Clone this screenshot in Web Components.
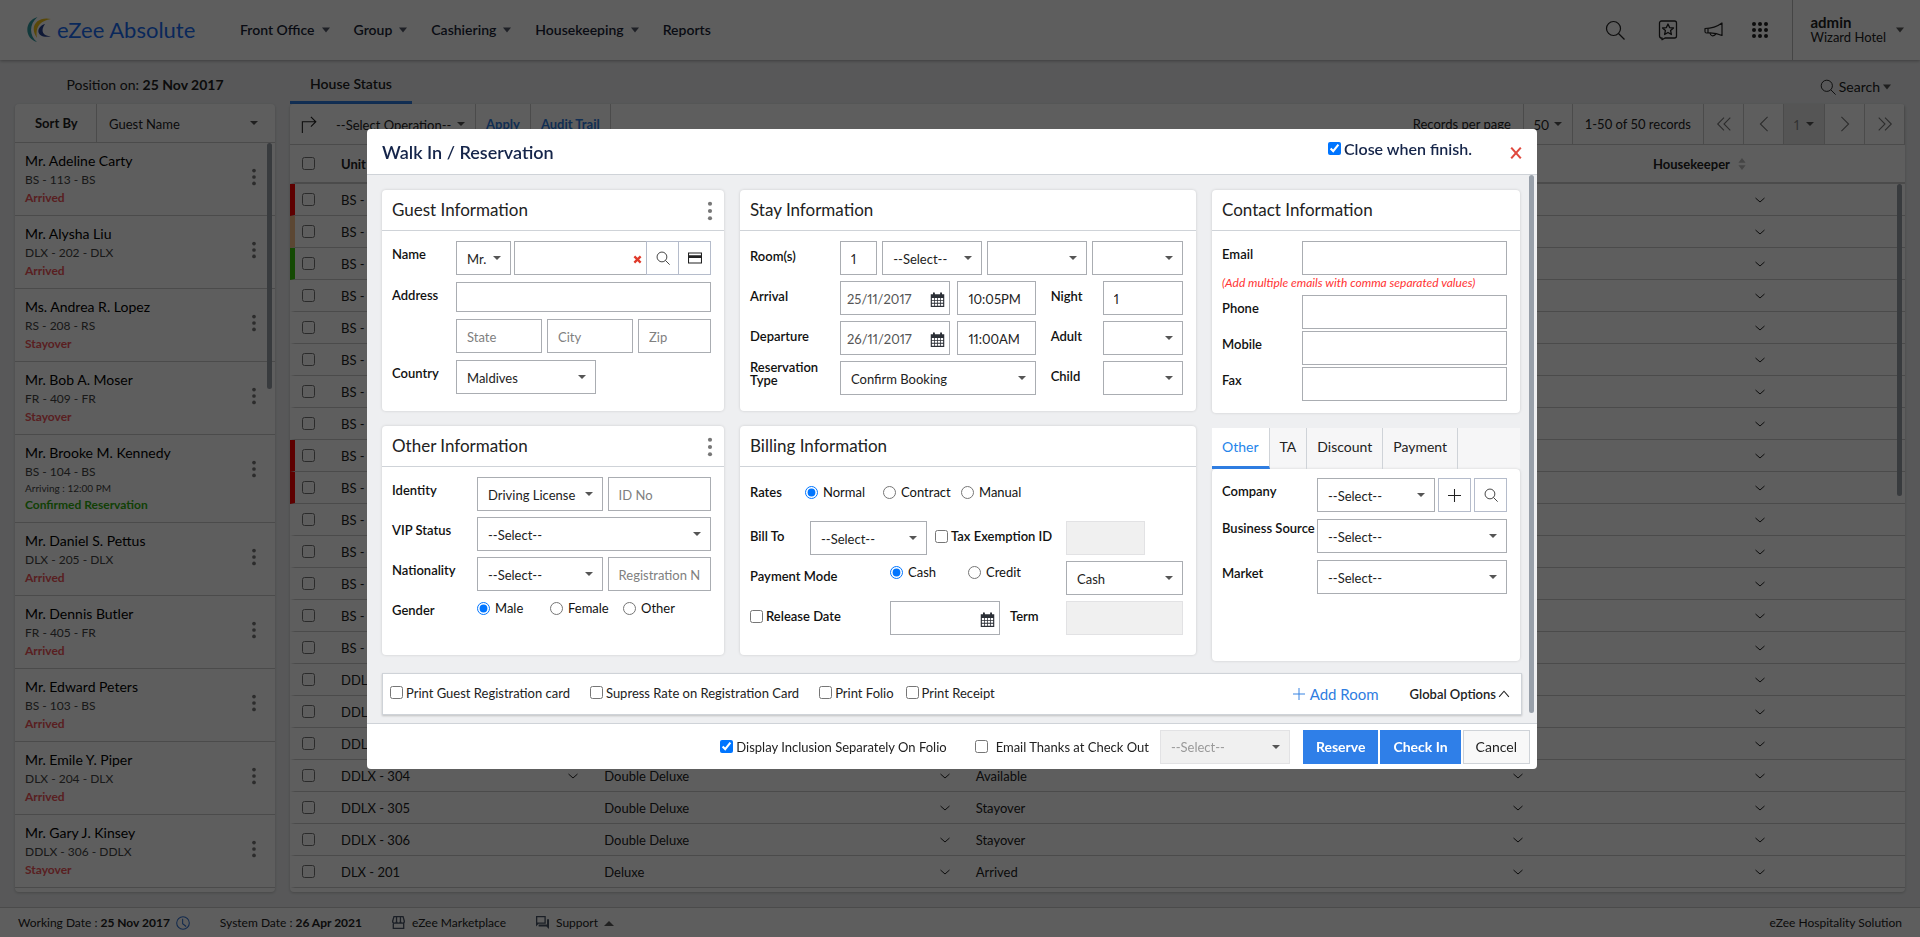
<!DOCTYPE html>
<html lang="en">
<head>
    <meta charset="UTF-8">
    <meta name="viewport" content="width=device-width, initial-scale=1.0">
    <title>eZee Absolute</title>
    <style>
        body {
            margin: 0;
            background: #eeeff1;
            font: 13px/18px Lato, "Liberation Sans", sans-serif;
            color: #222;
        }
    </style>
</head>
<body>
    <ez-app></ez-app>

    <template id="tmpl-app">
        <style>
            :host {
                display: flex;
                flex-direction: column;
                height: 100vh;
            }
            main {
                flex: 1;
                min-height: 0;
                display: grid;
                grid-template-columns: 260px 1fr;
                gap: 15px;
                padding: 0 15px 15px;
            }
        </style>
        <ez-header></ez-header>
        <main>
            <guest-list></guest-list>
            <house-status></house-status>
        </main>
        <ez-footer></ez-footer>
        <walkin-dialog></walkin-dialog>
    </template>

    <template id="tmpl-header">
        <style>
            :host {
                display: flex;
                align-items: center;
                height: 60px;
                background: #fff;
                box-shadow: 0 1px 3px rgba(0, 0, 0, .3);
                position: relative;
            }
            .logo {
                display: flex;
                align-items: center;
                gap: 5px;
                width: 240px;
                padding-left: 26px;
                box-sizing: border-box;
                font-size: 22px;
                color: #1a6cf5;
                text-decoration: none;
            }
            nav {
                display: flex;
                gap: 24px;
                flex: 1;
            }
            nav a {
                display: flex;
                align-items: center;
                gap: 7px;
                font-size: 14px;
                font-weight: 600;
                color: #1a1f36;
                text-decoration: none;
            }
            .tools {
                display: flex;
                gap: 26px;
                padding-right: 22px;
            }
            .tools button:first-child {
                margin-right: 7px;
            }
            .user {
                display: flex;
                align-items: center;
                justify-content: space-between;
                gap: 10px;
                height: 60px;
                padding: 0 16px 0 18px;
                border-left: 1px solid #bbb;
                line-height: 15px;
                text-align: left;
            }
            .user b {
                display: block;
                font-size: 15px;
            }
        </style>
        <a class="logo" href="#">
            <svg width="26" height="26" viewBox="0 0 26 26">
                <path fill="#2f9aa0" d="M11.5 0C-2 4-2 21 11 25 3 19 3 7 11.5 0z"/>
                <path fill="#f0c419" d="M25 2C13-1 2 8 11 21 9 11 13 4 25 2z"/>
                <path fill="#2b4594" d="M19 7C9 10 10 22 25 19.500 17 19 14 14 19 7z"/>
            </svg>
            <span>eZee Absolute</span>
        </a>
        <nav>
            <a href="#">Front Office <ez-icon name="down"></ez-icon></a>
            <a href="#">Group <ez-icon name="down"></ez-icon></a>
            <a href="#">Cashiering <ez-icon name="down"></ez-icon></a>
            <a href="#">Housekeeping <ez-icon name="down"></ez-icon></a>
            <a href="#">Reports</a>
        </nav>
        <div class="tools">
            <button aria-label="Search"><ez-icon name="search" size="20"></ez-icon></button>
            <button aria-label="Favourites"><ez-icon name="star" size="20"></ez-icon></button>
            <button aria-label="Announcements"><ez-icon name="horn" size="20"></ez-icon></button>
            <button aria-label="Apps"><ez-icon name="grid" size="20"></ez-icon></button>
        </div>
        <button class="user">
            <span><b>admin</b>Wizard Hotel</span>
            <ez-icon name="down"></ez-icon>
        </button>
    </template>

    <template id="tmpl-guests">
        <style>
            :host {
                display: flex;
                flex-direction: column;
                min-height: 0;
            }
            .position {
                height: 44px;
                line-height: 50px;
                box-sizing: border-box;
                text-align: center;
                font-size: 14px;
            }
            .panel {
                flex: 1;
                min-height: 0;
                overflow: hidden;
                background: #fff;
                border-radius: 4px;
                box-shadow: 0 1px 3px rgba(0, 0, 0, .2);
                position: relative;
            }
            .sort {
                display: grid;
                grid-template-columns: 82px 1fr;
                align-items: center;
                height: 38px;
                border-bottom: 1px solid #ccc;
            }
            .sort label {
                font-weight: 700;
                padding-left: 20px;
                line-height: 38px;
                border-right: 1px solid #ccc;
            }
            .sort select {
                padding-left: 12px;
                border: 0;
            }
            .sort .sel::after {
                margin-right: 17px;
            }
            ul {
                margin: 0;
                padding: 0;
                list-style: none;
            }
            li {
                display: flex;
                justify-content: space-between;
                padding: 8px 13px 8px 10px;
                border-bottom: 1px solid #ccc;
            }
            li p {
                margin: 0;
                font-size: 12px;
                color: #444;
            }
            li .name {
                font-size: 14px;
                line-height: 20px;
                color: #000;
            }
            li .time {
                font-size: 10px;
                line-height: 15px;
            }
            li .status {
                font-weight: 700;
                color: #f0555a;
            }
            li .confirmed {
                color: #2fae0e;
            }
            li button {
                height: 50px;
            }
            .thumb {
                position: absolute;
                top: 39px;
                right: 3px;
                width: 5px;
                height: 246px;
                border-radius: 3px;
                background: #999fa8;
            }
        </style>
        <div class="position">Position on: <b>25 Nov 2017</b></div>
        <div class="panel">
            <div class="sort">
                <label for="sort">Sort By</label>
                <span class="sel"><select id="sort"><option>Guest Name</option></select></span>
            </div>
            <ul></ul>
            <div class="thumb"></div>
        </div>
    </template>

    <template id="tmpl-status">
        <style>
            :host {
                display: flex;
                flex-direction: column;
                min-height: 0;
            }
            .top {
                display: flex;
                justify-content: space-between;
                height: 44px;
                padding-right: 14px;
            }
            .tab {
                padding: 6px 20px 0;
                height: 44px;
                border-bottom: 3px solid #2f7de1;
                font-size: 14px;
                font-weight: 600;
            }
            .search {
                display: flex;
                align-items: center;
                gap: 3px;
                padding-top: 9px;
                font-size: 14px;
            }
            .panel {
                flex: 1;
                min-height: 0;
                overflow: hidden;
                background: #fff;
                border-radius: 4px;
                box-shadow: 0 1px 3px rgba(0, 0, 0, .2);
                position: relative;
            }
            .bar {
                display: flex;
                align-items: stretch;
                height: 40px;
                border-bottom: 1px solid #ccc;
            }
            .bar > * {
                display: flex;
                align-items: center;
                border-right: 1px solid #ccc;
                box-sizing: border-box;
            }
            .bar .arrow {
                width: 36px;
                padding-left: 11px;
                border: 0;
            }
            .bar .sel {
                display: grid;
            }
            .bar select {
                border: 0;
            }
            .bar .op {
                width: 150px;
            }
            .bar a {
                padding: 0 10px;
                font-weight: 700;
                color: #2f7de1;
                text-decoration: none;
            }
            .bar label {
                flex: 1;
                justify-content: flex-end;
                padding-right: 12px;
            }
            .bar .count {
                width: 49px;
            }
            .bar .page {
                width: 41px;
                background: #e6e6e6;
                color: #888;
            }
            .bar .total {
                padding: 0 12px;
            }
            .bar .nav {
                width: 40px;
                justify-content: center;
                color: #777;
            }
            table {
                width: 100%;
                table-layout: fixed;
                border-collapse: separate;
                border-spacing: 0;
            }
            th, td {
                height: 31px;
                padding: 0 12px 0 14px;
                border-bottom: 1px solid #ccc;
                text-align: left;
            }
            th {
                height: 37px;
                border-bottom-width: 2px;
            }
            th:last-child, td:last-child {
                padding: 0;
            }
            td:first-child, th:first-child {
                padding: 0 0 0 7px;
                border-left: 5px solid transparent;
            }
            tr.red td:first-child { border-left-color: #f00; }
            tr.orange td:first-child { border-left-color: #f9c08a; }
            tr.green td:first-child { border-left-color: #36c90a; }
            .cell {
                display: flex;
                align-items: center;
                justify-content: space-between;
            }
            .cell ez-icon {
                margin-left: auto;
            }
            .keeper {
                display: flex;
                align-items: center;
                gap: 6px;
                padding-left: 104px;
            }
            .thumb {
                position: absolute;
                top: 80px;
                right: 3px;
                width: 5px;
                height: 312px;
                border-radius: 3px;
                background: #999fa8;
            }
        </style>
        <div class="top">
            <button class="tab">House Status</button>
            <button class="search"><ez-icon name="search" size="16"></ez-icon>Search<ez-icon name="down"></ez-icon></button>
        </div>
        <div class="panel">
            <div class="bar">
                <span class="arrow"><ez-icon name="turn" size="18"></ez-icon></span>
                <span class="sel op"><select aria-label="Operation"><option>--Select Operation--</option></select></span>
                <a href="#">Apply</a>
                <a href="#">Audit Trail</a>
                <label for="count">Records per page</label>
                <span class="sel count"><select id="count"><option>50</option></select></span>
                <span class="total">1-50 of 50 records</span>
                <button class="nav" aria-label="First"><ez-icon name="first" size="18"></ez-icon></button>
                <button class="nav" aria-label="Previous"><ez-icon name="prev" size="18"></ez-icon></button>
                <span class="sel page"><select aria-label="Page"><option>1</option></select></span>
                <button class="nav" aria-label="Next"><ez-icon name="next" size="18"></ez-icon></button>
                <button class="nav" aria-label="Last"><ez-icon name="last" size="18"></ez-icon></button>
            </div>
            <table>
                <colgroup>
                    <col style="width: 37px">
                    <col style="width: 16.300%">
                    <col style="width: 23%">
                    <col style="width: 35.500%">
                    <col style="width: 15%">
                    <col>
                </colgroup>
                <thead>
                    <tr>
                        <th><input type="checkbox" aria-label="Select all"></th>
                        <th>Unit</th>
                        <th></th>
                        <th></th>
                        <th><span class="keeper">Housekeeper <ez-icon name="sort" size="12"></ez-icon></span></th>
                        <th></th>
                    </tr>
                </thead>
                <tbody></tbody>
            </table>
            <div class="thumb"></div>
        </div>
    </template>

    <template id="tmpl-footer">
        <style>
            :host {
                display: flex;
                align-items: center;
                height: 29px;
                padding: 0 18px;
                border-top: 1px solid #ccc;
                background: #fff;
                font-size: 12px;
            }
            span, a {
                display: flex;
                align-items: center;
                gap: 7px;
                margin-right: 30px;
                color: inherit;
                text-decoration: none;
            }
            span {
                gap: 3px;
            }
            span ez-icon {
                margin-left: 3px;
            }
            span:last-child {
                margin: 0 0 0 auto;
            }
        </style>
        <span>Working Date : <b>25 Nov 2017</b> <ez-icon name="clock" size="14"></ez-icon></span>
        <span>System Date : <b>26 Apr 2021</b></span>
        <a href="#"><ez-icon name="shop" size="13"></ez-icon>eZee Marketplace</a>
        <a href="#"><ez-icon name="chat" size="13"></ez-icon>Support <ez-icon name="up"></ez-icon></a>
        <span>eZee Hospitality Solution</span>
    </template>

    <template id="tmpl-card">
        <style>
            :host {
                display: block;
                background: #fff;
                border-radius: 4px;
                box-shadow: 0 0 3px rgba(0, 0, 0, .15);
            }
            header {
                display: flex;
                align-items: center;
                justify-content: space-between;
                height: 40px;
                padding: 0 5px 0 10px;
                border-bottom: 1px solid #cfd3d8;
            }
            h2 {
                margin: 0;
                font-size: 17px;
                font-weight: 400;
            }
            .body {
                box-sizing: border-box;
                min-height: 180px;
                padding: 10px 13px 12px 10px;
            }
            :host([tall]) .body {
                min-height: 188px;
            }
        </style>
        <header><h2></h2><slot name="menu"></slot></header>
        <div class="body"><slot></slot></div>
    </template>

    <template id="tmpl-tabs">
        <style>
            :host {
                display: block;
            }
            .tabs {
                display: flex;
                height: 41px;
                background: #f6f6f7;
            }
            .tabs button {
                padding: 0 10px 4px;
                border-right: 1px solid #cfd3d8;
                font-size: 14px;
            }
            .tabs .on {
                padding-bottom: 1px;
                border-bottom: 3px solid #2f7de1;
                background: #fff;
                color: #2585ea;
            }
            .body {
                box-sizing: border-box;
                min-height: 192px;
                padding: 9px 13px 12px 10px;
                background: #fff;
                border-radius: 4px;
                box-shadow: 0 0 3px rgba(0, 0, 0, .15);
            }
        </style>
        <div class="tabs">
            <button class="on">Other</button>
            <button>TA</button>
            <button>Discount</button>
            <button>Payment</button>
        </div>
        <div class="body"><slot></slot></div>
    </template>

    <template id="tmpl-dialog">
        <style>
            :host {
                position: fixed;
                inset: 0;
                display: flex;
                justify-content: center;
                align-items: flex-start;
                padding: 129px 16px 0 0;
                background: rgba(0, 0, 0, .63);
            }
            .dialog {
                width: 94%;
                max-width: 1170px;
                border-radius: 4px;
                background: #fff;
                overflow: hidden;
            }
            .head {
                display: flex;
                align-items: center;
                height: 45px;
                padding: 0 15px;
                border-bottom: 1px solid #cfd3d8;
                color: #15254a;
            }
            h1 {
                flex: 1;
                margin: 0;
                font-size: 18px;
                font-weight: 600;
            }
            .head label {
                padding: 0 38px 6px 0;
                font-size: 16px;
                font-weight: 600;
            }
            .head button {
                color: #e04a3f;
            }
            .body {
                position: relative;
                padding: 15px 15px 8px;
                background: #eeeff1;
            }
            .thumb {
                position: absolute;
                top: 0;
                right: 3px;
                bottom: 10px;
                width: 5px;
                border-radius: 3px;
                background: #98a0aa;
            }
            .columns {
                display: grid;
                grid-template-columns: 342fr 456fr 308fr;
                gap: 16px;
                padding-right: 2px;
            }
            .columns > div {
                display: grid;
                gap: 15px;
                align-content: start;
            }
            .rows {
                display: grid;
                gap: 6px;
            }
            .rows.loose { gap: 7px; }
            .rows.tight { gap: 2px; }
            .row {
                display: grid;
                gap: 5px;
                align-items: start;
            }
            .row > label, .row > .label {
                padding-top: 4px;
                font-weight: 600;
                color: #111;
            }
            .low .row > label, .low .row > .label {
                padding-top: 6px;
            }
            .row .two-line {
                line-height: 13px;
            }
            .low .row > .two-line, .row > .raised {
                padding-top: 0;
            }
            .row .aside {
                padding-left: 8px;
            }
            .row > .check, .low .row > .check {
                font-weight: 400;
                padding-top: 2px;
            }
            .low .row > .strong {
                font-weight: 600;
                padding-top: 6px;
            }
            .low .rates > .check {
                padding-top: 6px;
            }
            .check {
                display: inline-flex;
                align-items: center;
                gap: 3px;
            }
            .radio {
                gap: 5px;
            }
            .name { grid-template-columns: 61px 55px 1fr; gap: 3px; }
            .name .group {
                display: grid;
                grid-template-columns: 1fr 32px 32px;
            }
            .plain { grid-template-columns: 64px 1fr; gap: 0; }
            .plain input {
                height: 30px;
            }
            .place { grid-template-columns: 86fr 86fr 73fr; padding-left: 64px; }
            .country { grid-template-columns: 64px 140px; gap: 0; }
            .rooms { grid-template-columns: 85px 37fr 99fr 100fr 90fr; }
            .stay { grid-template-columns: 83px 110fr 78fr 53px 80fr; gap: 7px; }
            .stay .wide { grid-column: span 2; }
            .contact { grid-template-columns: 80px 1fr; gap: 0; }
            .note {
                margin: 0;
                padding-bottom: 4px;
                font-size: 12px;
                font-style: italic;
                line-height: 12px;
                white-space: nowrap;
                color: #f33;
            }
            .identity { grid-template-columns: 80px 125fr 103fr; }
            .identity .wide { grid-column: span 2; }
            .gender { grid-template-columns: 80px 68px 68px 1fr; }
            .rates { grid-template-columns: 55px 78px 78px 1fr; gap: 0; height: 38px; }
            .bill { grid-template-columns: 52px 117px 123px 79px; gap: 8px; }
            .payment { grid-template-columns: 140px 78px 98px 1fr; gap: 0; }
            .release { grid-template-columns: 140px 110px 66px 1fr; gap: 0; }
            .release .term { padding-left: 10px; }
            .company { grid-template-columns: 92px 1fr 33px 33px; gap: 3px; }
            .source { grid-template-columns: 95px 1fr; gap: 0; white-space: nowrap; }

            .clear, .date {
                display: grid;
                align-items: center;
            }
            .clear > *, .date > * {
                grid-area: 1 / 1;
            }
            .clear button, .date button {
                justify-self: end;
                margin-right: 5px;
            }
            .clear button {
                color: #e03a2a;
            }
            .date input {
                padding-left: 6px;
                color: #555;
            }
            .tool {
                display: flex;
                align-items: center;
                justify-content: center;
                height: 34px;
                box-sizing: border-box;
                border: 1px solid #b5bccb;
            }
            .name .tool {
                margin-left: -1px;
            }
            .options {
                display: flex;
                align-items: center;
                height: 40px;
                margin-top: 12px;
                padding: 0 10px 0 7px;
                border: 1px solid #cfd3d8;
                box-shadow: 0 1px 2px rgba(0, 0, 0, .2);
                background: #fff;
            }
            .options .check {
                margin-right: 20px;
                padding-bottom: 3px;
            }
            .options .check + .check + .check {
                margin-right: 12px;
            }
            .add {
                display: flex;
                align-items: center;
                gap: 5px;
                margin: 0 31px 0 auto;
                font-size: 15px;
                color: #2f7de1;
            }
            .global {
                display: flex;
                align-items: center;
                gap: 1px;
                font-weight: 600;
            }
            .foot {
                display: flex;
                align-items: center;
                justify-content: flex-end;
                gap: 2px;
                height: 45px;
                padding: 0 7px;
                border-top: 1px solid #cfd3d8;
            }
            .foot .check {
                margin-right: 26px;
            }
            .foot .thanks {
                gap: 8px;
                margin-right: 9px;
            }
            .foot .sel {
                width: 130px;
                margin-right: 11px;
            }
            .foot .btn {
                height: 34px;
                padding: 0 13px;
                background: #2f7fe8;
                color: #fff;
                font-size: 14px;
                font-weight: 700;
            }
            .foot .cancel {
                padding: 0 12px;
                border: 1px solid #cfd3d8;
                background: #f8f8f8;
                color: #222;
                font-weight: 400;
            }
        </style>
        <form class="dialog" role="dialog" aria-labelledby="title">
            <div class="head">
                <h1 id="title">Walk In / Reservation</h1>
                <label class="check"><input type="checkbox" checked>Close when finish.</label>
                <button type="button" aria-label="Close"><ez-icon name="close" size="12"></ez-icon></button>
            </div>
            <div class="body">
                <div class="columns">
                    <div>
                        <info-card heading="Guest Information">
                            <button type="button" slot="menu" aria-label="Guest menu"><ez-icon name="dots" size="18"></ez-icon></button>
                            <div class="rows loose">
                                <div class="row name">
                                    <label for="name">Name</label>
                                    <span class="sel"><select aria-label="Title"><option>Mr.</option></select></span>
                                    <span class="group">
                                        <span class="clear">
                                            <input type="text" id="name">
                                            <button type="button" aria-label="Clear name"><ez-icon name="times" size="9"></ez-icon></button>
                                        </span>
                                        <button type="button" class="tool" aria-label="Find guest"><ez-icon name="search" size="14"></ez-icon></button>
                                        <button type="button" class="tool" aria-label="Scan card"><ez-icon name="card" size="14"></ez-icon></button>
                                    </span>
                                </div>
                                <div class="row plain"><label for="address">Address</label><input type="text" id="address"></div>
                                <div class="row place">
                                    <input type="text" placeholder="State" aria-label="State">
                                    <input type="text" placeholder="City" aria-label="City">
                                    <input type="text" placeholder="Zip" aria-label="Zip">
                                </div>
                                <div class="row country">
                                    <label for="country">Country</label>
                                    <span class="sel"><select id="country"><option>Maldives</option></select></span>
                                </div>
                            </div>
                        </info-card>
                        <info-card heading="Other Information" tall>
                            <button type="button" slot="menu" aria-label="Other menu"><ez-icon name="dots" size="18"></ez-icon></button>
                            <div class="rows">
                                <div class="row identity">
                                    <label for="identity">Identity</label>
                                    <span class="sel"><select id="identity"><option>Driving License</option></select></span>
                                    <input type="text" placeholder="ID No" aria-label="ID No">
                                </div>
                                <div class="row identity">
                                    <label for="vip">VIP Status</label>
                                    <span class="sel wide"><select id="vip"><option>--Select--</option></select></span>
                                </div>
                                <div class="row identity">
                                    <label for="nation">Nationality</label>
                                    <span class="sel"><select id="nation"><option>--Select--</option></select></span>
                                    <input type="text" placeholder="Registration No" aria-label="Registration No">
                                </div>
                                <div class="row gender">
                                    <span class="label">Gender</span>
                                    <label class="check radio"><input type="radio" name="gender" checked>Male</label>
                                    <label class="check radio"><input type="radio" name="gender">Female</label>
                                    <label class="check radio"><input type="radio" name="gender">Other</label>
                                </div>
                            </div>
                        </info-card>
                    </div>
                    <div>
                        <info-card heading="Stay Information">
                            <div class="rows low">
                                <div class="row rooms">
                                    <label for="rooms">Room(s)</label>
                                    <input type="text" id="rooms" value="1">
                                    <span class="sel"><select aria-label="Room type"><option>--Select--</option></select></span>
                                    <span class="sel"><select aria-label="Rate type"><option></option></select></span>
                                    <span class="sel"><select aria-label="Room"><option></option></select></span>
                                </div>
                                <div class="row stay">
                                    <label for="arrival">Arrival</label>
                                    <span class="date"><input type="text" id="arrival" value="25/11/2017"><button type="button" aria-label="Pick arrival"><ez-icon name="calendar" size="15"></ez-icon></button></span>
                                    <input type="text" aria-label="Arrival time" value="10:05PM">
                                    <label class="aside" for="night">Night</label>
                                    <input type="text" id="night" value="1">
                                </div>
                                <div class="row stay">
                                    <label for="departure">Departure</label>
                                    <span class="date"><input type="text" id="departure" value="26/11/2017"><button type="button" aria-label="Pick departure"><ez-icon name="calendar" size="15"></ez-icon></button></span>
                                    <input type="text" aria-label="Departure time" value="11:00AM">
                                    <label class="aside" for="adult">Adult</label>
                                    <span class="sel"><select id="adult"><option></option></select></span>
                                </div>
                                <div class="row stay">
                                    <label class="two-line" for="type">Reservation Type</label>
                                    <span class="sel wide"><select id="type"><option>Confirm Booking</option></select></span>
                                    <label class="aside" for="child">Child</label>
                                    <span class="sel"><select id="child"><option></option></select></span>
                                </div>
                            </div>
                        </info-card>
                        <info-card heading="Billing Information" tall>
                            <div class="rows low">
                                <div class="row rates">
                                    <span class="label">Rates</span>
                                    <label class="check radio"><input type="radio" name="rate" checked>Normal</label>
                                    <label class="check radio"><input type="radio" name="rate">Contract</label>
                                    <label class="check radio"><input type="radio" name="rate">Manual</label>
                                </div>
                                <div class="row bill">
                                    <label for="bill">Bill To</label>
                                    <span class="sel"><select id="bill"><option>--Select--</option></select></span>
                                    <label class="check strong"><input type="checkbox">Tax Exemption ID</label>
                                    <input type="text" aria-label="Tax ID" disabled>
                                </div>
                                <div class="row payment">
                                    <span class="label">Payment Mode</span>
                                    <label class="check radio"><input type="radio" name="pay" checked>Cash</label>
                                    <label class="check radio"><input type="radio" name="pay">Credit</label>
                                    <span class="sel"><select aria-label="Payment method"><option>Cash</option></select></span>
                                </div>
                                <div class="row release">
                                    <label class="check strong"><input type="checkbox">Release Date</label>
                                    <span class="date"><input type="text" aria-label="Release date"><button type="button" aria-label="Pick release date"><ez-icon name="calendar" size="15"></ez-icon></button></span>
                                    <label class="term" for="term">Term</label>
                                    <input type="text" id="term" disabled>
                                </div>
                            </div>
                        </info-card>
                    </div>
                    <div>
                        <info-card heading="Contact Information">
                            <div class="rows tight">
                                <div class="row contact"><label for="email">Email</label><input type="text" id="email"></div>
                                <p class="note">(Add multiple emails with comma separated values)</p>
                                <div class="row contact"><label for="phone">Phone</label><input type="text" id="phone"></div>
                                <div class="row contact"><label for="mobile">Mobile</label><input type="text" id="mobile"></div>
                                <div class="row contact"><label for="fax">Fax</label><input type="text" id="fax"></div>
                            </div>
                        </info-card>
                        <info-tabs>
                            <div class="rows loose">
                                <div class="row company">
                                    <label for="company">Company</label>
                                    <span class="sel"><select id="company"><option>--Select--</option></select></span>
                                    <button type="button" class="tool" aria-label="Add company"><ez-icon name="plus" size="13"></ez-icon></button>
                                    <button type="button" class="tool" aria-label="Find company"><ez-icon name="search" size="14"></ez-icon></button>
                                </div>
                                <div class="row source">
                                    <label class="raised" for="source">Business Source</label>
                                    <span class="sel"><select id="source"><option>--Select--</option></select></span>
                                </div>
                                <div class="row source">
                                    <label for="market">Market</label>
                                    <span class="sel"><select id="market"><option>--Select--</option></select></span>
                                </div>
                            </div>
                        </info-tabs>
                    </div>
                </div>
                <div class="options">
                    <label class="check"><input type="checkbox">Print Guest Registration card</label>
                    <label class="check"><input type="checkbox">Supress Rate on Registration Card</label>
                    <label class="check"><input type="checkbox">Print Folio</label>
                    <label class="check"><input type="checkbox">Print Receipt</label>
                    <button type="button" class="add"><ez-icon name="plus" size="12"></ez-icon>Add Room</button>
                    <button type="button" class="global">Global Options<ez-icon name="chevup" size="14"></ez-icon></button>
                </div>
                <div class="thumb"></div>
            </div>
            <div class="foot">
                <label class="check"><input type="checkbox" checked>Display Inclusion Separately On Folio</label>
                <label class="check thanks"><input type="checkbox">Email Thanks at Check Out</label>
                <span class="sel"><select aria-label="Email template" disabled><option>--Select--</option></select></span>
                <button type="button" class="btn">Reserve</button>
                <button type="button" class="btn">Check In</button>
                <button type="button" class="btn cancel">Cancel</button>
            </div>
        </form>
    </template>

    <script>
        // Controls look the same in every shadow root
        const controls = `
            b, th { font-weight: 700; }
            button {
                margin: 0;
                padding: 0;
                border: 0;
                background: none;
                font: inherit;
                color: inherit;
            }
            ez-icon { vertical-align: middle; }
            input[type=checkbox], input[type=radio] {
                flex: none;
                display: block;
                width: 13px;
                height: 13px;
                margin: 0;
            }
            input[type=text], select {
                box-sizing: border-box;
                width: 100%;
                min-width: 0;
                height: 34px;
                margin: 0;
                padding: 1px 10px 0;
                border: 1px solid #aaadb2;
                border-radius: 0;
                background: #fff;
                font: inherit;
                color: inherit;
                font-variant-numeric: proportional-nums;
            }
            select {
                appearance: none;
                background: none;
            }
            input[type=text]:disabled, select:disabled {
                border-color: #e2e2e4;
                background: #f0f0f0;
                color: #999;
                opacity: 1;
            }
            ::placeholder { color: #808080; }
            .sel {
                display: grid;
                align-items: center;
            }
            .sel > select { grid-area: 1 / 1; }
            .sel::after {
                content: "";
                grid-area: 1 / 1;
                justify-self: end;
                margin-right: 10px;
                border: 4px solid transparent;
                border-top-color: #555;
                border-bottom: 0;
                pointer-events: none;
            }
        `

        const icons = {
            down: '<path fill="currentColor" opacity=".75" d="M0 1.500h8l-4 5z"/>',
            up: '<path fill="currentColor" opacity=".75" d="M-1 7h10l-5-5z"/>',
            search: '<g fill="none" stroke="currentColor" stroke-width="1.200"><circle cx="8.500" cy="8.500" r="7"/><path d="M13.500 13.500l6 6"/></g>',
            star: '<g fill="none" stroke="currentColor" stroke-width="1.300" stroke-linejoin="round"><path d="M3.500 1h13a2 2 0 0 1 2 2v13a2 2 0 0 1-2 2H7l-3 1.700V18a2 2 0 0 1-2.500-2V3a2 2 0 0 1 2-2z"/><path d="M10 4l1.600 3.600 3.900.400-2.900 2.600.800 3.900-3.400-2-3.400 2 .800-3.900L4.500 8l3.900-.400z"/></g>',
            horn: '<g fill="none" stroke="currentColor" stroke-width="1.200" stroke-linejoin="round"><path d="M1 8.500c5 0 11-1 17-5.500v12.500C13 13 7 12.500 2.500 13c-1 0-1.500-.500-1.500-1.500z"/><path d="M4 8.500V13M6 13c.500 3 3 4 6 1"/></g>',
            grid: '<path stroke="currentColor" stroke-width="4" stroke-linecap="round" d="M4 4h.010M10 4h.010M16 4h.010M4 10h.010M10 10h.010M16 10h.010M4 16h.010M10 16h.010M16 16h.010"/>',
            dots: '<g fill="#777"><circle cx="10" cy="2" r="2.300"/><circle cx="10" cy="10" r="2.300"/><circle cx="10" cy="18" r="2.300"/></g>',
            turn: '<path fill="none" stroke="currentColor" stroke-width="1.200" d="M1.500 20V7.500H16M11 2l5.500 5.500L11 13"/>',
            first: '<path fill="none" stroke="currentColor" stroke-width="1.200" d="M10 3l-7 7 7 7M17 3l-7 7 7 7"/>',
            last: '<path fill="none" stroke="currentColor" stroke-width="1.200" d="M3 3l7 7-7 7M10 3l7 7-7 7"/>',
            prev: '<path fill="none" stroke="currentColor" stroke-width="1.200" d="M14 2l-8 8 8 8"/>',
            next: '<path fill="none" stroke="currentColor" stroke-width="1.200" d="M6 2l8 8-8 8"/>',
            chev: '<path fill="none" stroke="currentColor" stroke-width="2" d="M1 6l9 8 9-8"/>',
            chevup: '<path fill="none" stroke="currentColor" stroke-width="1.500" d="M3 14l7-8 7 8"/>',
            sort: '<path fill="#bbb" d="M4 8l6-8 6 8zM4 12h12l-6 8z"/>',
            clock: '<g fill="none" stroke="#2f6fd0" stroke-width="1.500"><circle cx="10" cy="10" r="9"/><path d="M9.500 4v7l5 4"/></g>',
            shop: '<path fill="none" stroke="#4a5568" stroke-width="2" d="M3 1h14l2 7a3 3 0 0 1-6 0 3 3 0 0 1-6 0 3 3 0 0 1-6 0zM2 10v9h16v-9M7 1v7M13 1v7"/>',
            chat: '<path fill="#4a5568" fill-rule="evenodd" d="M0 0h15v12H4l-4 4zM2 2v8h11V2zM17 5h3v15l-4-4H4v-3h13z"/>',
            close: '<path fill="none" stroke="currentColor" stroke-width="3.500" d="M2 1l16 18M18 1L2 19"/>',
            times: '<path stroke="currentColor" stroke-width="5" d="M3 3l14 14M17 3L3 17"/>',
            card: '<path fill="#222" fill-rule="evenodd" d="M0 2h20v16H0zM1.500 3.500v2.500h17V3.500zM1.500 10v6.500h17V10z"/>',
            plus: '<path stroke="currentColor" stroke-width="1.600" d="M10 0v20M0 10h20"/>',
            calendar: '<path fill="#2b2f36" fill-rule="evenodd" d="M1 3h3V1q1-1.500 2.500 0v2h7V1q1-1.500 2.500 0v2h3v17H1zM2.500 8v2.500h3V8zM6.500 8v2.500h3V8zM10.500 8v2.500h3V8zM14.500 8v2.500h3V8zM2.500 11.800v2.600h3v-2.600zM6.500 11.800v2.600h3v-2.600zM10.500 11.800v2.600h3v-2.600zM14.500 11.800v2.600h3v-2.600zM2.500 15.800v2.600h3v-2.600zM6.500 15.800v2.600h3v-2.600zM10.500 15.800v2.600h3v-2.600zM14.500 15.800v2.600h3v-2.600z"/>'
        }

        customElements.define('ez-icon', class extends HTMLElement {
            connectedCallback() {
                const name = this.getAttribute('name')
                const size = this.getAttribute('size') || 8
                const box = this.hasAttribute('size') ? 20 : 8
                const shadow = this.attachShadow({mode: 'open'})
                shadow.innerHTML = `
                    <style>:host { display: inline-flex; flex: none } svg { overflow: visible }</style>
                    <svg width="${size}" height="${size}" viewBox="0 0 ${box} ${box}">${icons[name]}</svg>`
            }
        })

        class EzElement extends HTMLElement {
            connectedCallback() {
                const shadow = this.attachShadow({mode: 'open'})
                const style = document.createElement('style')
                style.textContent = controls
                shadow.append(style, document.getElementById(this.constructor.tmpl).content.cloneNode(true))
                this.render(shadow)
            }
            render() {}
        }

        customElements.define('ez-header', class extends EzElement {
            static tmpl = 'tmpl-header'
        })

        customElements.define('ez-footer', class extends EzElement {
            static tmpl = 'tmpl-footer'
        })

        const guests = [
            ['Mr. Adeline Carty', 'BS - 113 - BS', 'Arrived'],
            ['Mr. Alysha Liu', 'DLX - 202 - DLX', 'Arrived'],
            ['Ms. Andrea R. Lopez', 'RS - 208 - RS', 'Stayover'],
            ['Mr. Bob A. Moser', 'FR - 409 - FR', 'Stayover'],
            ['Mr. Brooke M. Kennedy', 'BS - 104 - BS', 'Confirmed Reservation', 'Arriving : 12:00 PM'],
            ['Mr. Daniel S. Pettus', 'DLX - 205 - DLX', 'Arrived'],
            ['Mr. Dennis Butler', 'FR - 405 - FR', 'Arrived'],
            ['Mr. Edward Peters', 'BS - 103 - BS', 'Arrived'],
            ['Mr. Emile Y. Piper', 'DLX - 204 - DLX', 'Arrived'],
            ['Mr. Gary J. Kinsey', 'DDLX - 306 - DDLX', 'Stayover']
        ]

        customElements.define('guest-list', class extends EzElement {
            static tmpl = 'tmpl-guests'
            render(shadow) {
                shadow.querySelector('ul').innerHTML = guests.map(([name, room, status, time]) => `
                    <li>
                        <div>
                            <p class="name">${name}</p>
                            <p>${room}</p>
                            ${time ? `<p class="time">${time}</p>` : ''}
                            <p class="status ${time ? 'confirmed' : ''}">${status}</p>
                        </div>
                        <button aria-label="Guest actions"><ez-icon name="dots" size="16"></ez-icon></button>
                    </li>`).join('')
            }
        })

        const marks = {0: 'red', 1: 'orange', 2: 'green', 8: 'red', 9: 'red'}
        const units = []
        for (let i = 1; i <= 15; i++) units.push([`BS - ${100 + i}`])
        for (let i = 301; i <= 303; i++) units.push([`DDLX - ${i}`])
        units.push(
            ['DDLX - 304', 'Double Deluxe', 'Available'],
            ['DDLX - 305', 'Double Deluxe', 'Stayover'],
            ['DDLX - 306', 'Double Deluxe', 'Stayover'],
            ['DLX - 201', 'Deluxe', 'Arrived']
        )

        customElements.define('house-status', class extends EzElement {
            static tmpl = 'tmpl-status'
            render(shadow) {
                const chev = '<ez-icon name="chev" size="10"></ez-icon>'
                shadow.querySelector('tbody').innerHTML = units.map(([unit, type = '', status = ''], i) => `
                    <tr class="${marks[i] || ''}">
                        <td><input type="checkbox" aria-label="${unit}"></td>
                        <td><span class="cell">${unit}${i === 18 ? chev : ''}</span></td>
                        <td><span class="cell">${type}${chev}</span></td>
                        <td><span class="cell">${status}${chev}</span></td>
                        <td><span class="cell">${chev}</span></td>
                        <td></td>
                    </tr>`).join('')
            }
        })

        customElements.define('info-card', class extends EzElement {
            static tmpl = 'tmpl-card'
            render(shadow) {
                shadow.querySelector('h2').textContent = this.getAttribute('heading')
            }
        })

        customElements.define('info-tabs', class extends EzElement {
            static tmpl = 'tmpl-tabs'
        })

        customElements.define('walkin-dialog', class extends EzElement {
            static tmpl = 'tmpl-dialog'
        })

        customElements.define('ez-app', class extends EzElement {
            static tmpl = 'tmpl-app'
        })
    </script>
</body>
</html>
